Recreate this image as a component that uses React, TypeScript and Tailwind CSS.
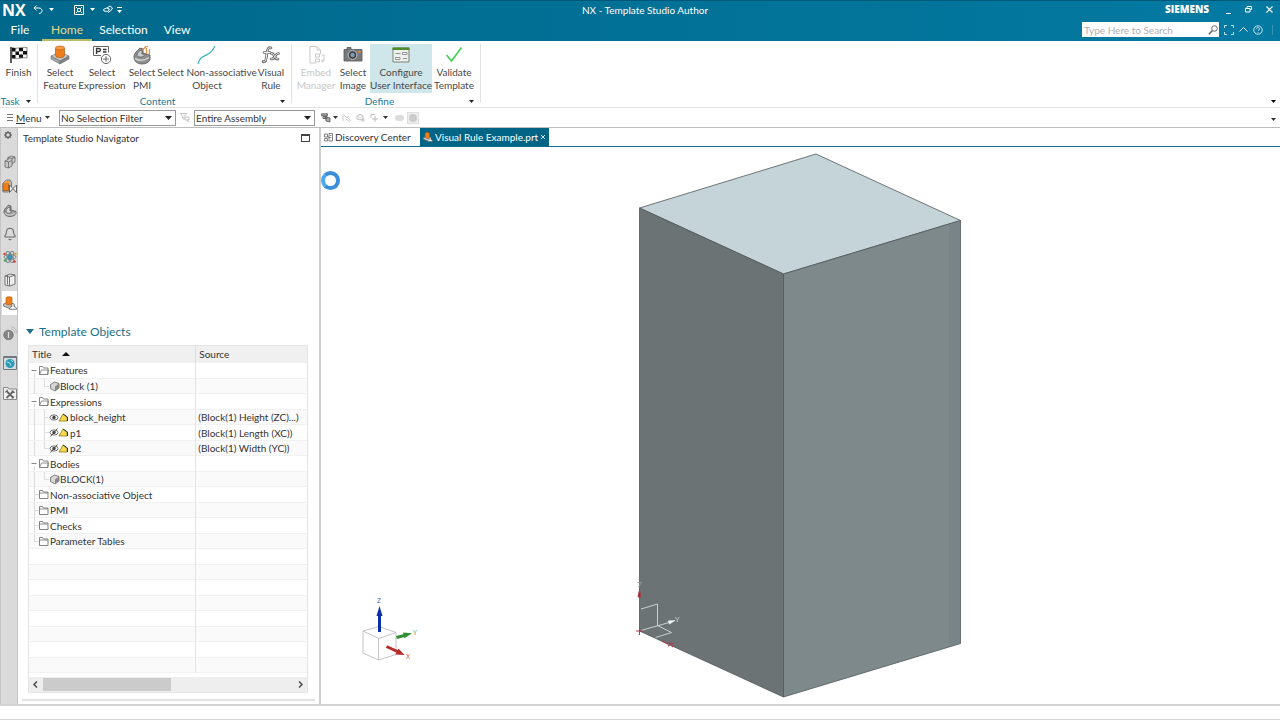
import React from 'react';
import { Bell } from 'lucide-react';

const Caret: React.FC<{ className?: string }> = ({ className = '' }) => (
  <svg className={`shrink-0 ${className}`} width="5" height="3" viewBox="0 0 5 3" fill="currentColor">
    <path d="M0 0h5L2.5 3z" />
  </svg>
);

const FinishIcon = () => (
  <svg width="18" height="18" viewBox="0 0 18 18">
    <path d="M1 1v16" stroke="#333" strokeWidth="1.6" />
    <path d="M2 1.5c5 2 9-1 15 0v10.500c-6-1-10 2-15 0z" fill="#f4f4f4" stroke="#444" strokeWidth=".6" />
    <path d="M2 2h3.500v3.500H2zM9 2h4v3.300H9zM5.500 5.500H9V9H5.500zM13 5h4v3.500h-4zM2 9h3.500v3.300H2zM9 8.500h4v3.300H9z" fill="#111" />
  </svg>
);

const FeatureIcon = () => (
  <svg width="20" height="20" viewBox="0 0 20 20">
    <path d="M1 11l9-4 9 4-9 5z" fill="#c9cccd" stroke="#777" strokeWidth=".7" />
    <path d="M1 11v3l9 5v-3z" fill="#a3a6a8" stroke="#777" strokeWidth=".7" />
    <path d="M19 11v3l-9 5v-3z" fill="#7f8385" stroke="#777" strokeWidth=".7" />
    <path d="M5.500 3v7.500c0 3 9 3 9 0V3z" fill="#ef7d1a" stroke="#a7550b" strokeWidth=".6" />
    <ellipse cx="10" cy="3" rx="4.500" ry="2" fill="#ff9b3e" stroke="#a7550b" strokeWidth=".6" />
  </svg>
);

const ExpressionIcon = () => (
  <svg width="20" height="20" viewBox="0 0 20 20" fill="none" stroke="#666">
    <path d="M9 10.500H1.500v-9h15v6" />
    <path d="M4.500 9V3.500h2.300c2.200 0 2.200 3 0 3H4.500M11 4.500h3.500M11 7h3.500" stroke="#333" strokeWidth="1.300" />
    <circle cx="14" cy="14" r="4.600" />
    <path d="M14 11.200v5.600M11.200 14h5.600" />
  </svg>
);

const PmiIcon = () => (
  <svg width="20" height="20" viewBox="0 0 20 20">
    <path d="M2 12c0-4 3-6 6-9l3 1v4l7 2v5c-2 3-5 4-8 4-5 0-8-3-8-7z" fill="#8d8f90" stroke="#555" strokeWidth=".8" />
    <path d="M3 13.500c4 2.500 9 2.500 14-1" fill="none" stroke="#d0d0d0" strokeWidth="1.500" />
    <path d="M5 10c0-3 3-5 5-5v4c2 0 3 1 2 2-2 1.500-7 1.500-7-1z" fill="#c9cbcc" stroke="#555" strokeWidth=".7" />
    <path d="M10.500 5L14 1.500M13 1.500h3M14.500 3v6M17.500 4v5" fill="none" stroke="#ef8a3a" strokeWidth="1.200" />
  </svg>
);

const CurveIcon = () => (
  <svg width="20" height="20" viewBox="0 0 20 20" fill="none" stroke="#3fb3bd" strokeWidth="1.200">
    <path d="M1 19c2-8 6-7 10-10 4-2 5-4 7-8" />
  </svg>
);

const FxIcon = () => (
  <svg width="20" height="20" viewBox="0 0 20 20" fill="none" strokeLinecap="round">
    <g stroke="#666" strokeWidth="2.600">
      <path d="M10 3c-3-1.500-3.500 2-4 5l-1 6c-.4 3-2 3.500-3 2.500M3 7.500h6" />
      <path d="M10.500 8.500c3-1 2.500 6.500 6.500 5.500M17.500 8.500c-3-1-3.500 6.500-7.500 5.500" />
    </g>
    <g stroke="#f6f6f6" strokeWidth="1">
      <path d="M10 3c-3-1.500-3.500 2-4 5l-1 6c-.4 3-2 3.500-3 2.500M3 7.500h6" />
      <path d="M10.500 8.500c3-1 2.500 6.500 6.500 5.500M17.500 8.500c-3-1-3.500 6.500-7.500 5.500" />
    </g>
  </svg>
);

const EmbedIcon = () => (
  <svg width="20" height="20" viewBox="0 0 20 20" fill="none" stroke="#c9c9c9">
    <path d="M10 18H4V1.500h7l3.500 3.500v4M11 1.500V5h3.500" />
    <path d="M9.500 9h4v3h-4zM9.500 14h4v3h-4zM15.500 10H18v6h-2.500M17 14.500L15.500 16l1.500 1.500" />
  </svg>
);

const CameraIcon = () => (
  <svg width="20" height="20" viewBox="0 0 20 20">
    <path d="M1 4.500h3V2.500h4v2h11V16H1z" fill="#77797b" stroke="#555" strokeWidth=".8" />
    <circle cx="9.500" cy="10" r="4.400" fill="#3a4047" stroke="#ccc" />
    <circle cx="9.500" cy="10" r="2.200" fill="#7f9cb8" />
    <path d="M15 7h2.500" stroke="#f0902f" strokeWidth="1.500" />
  </svg>
);

const ConfigureIcon = () => (
  <svg width="20" height="20" viewBox="0 0 20 20">
    <path d="M2 3h16v14H2z" fill="#eef0ec" stroke="#7a8078" />
    <path d="M1.500 2.500h17v2.500h-17z" fill="#4f8a2d" />
    <path d="M4.500 8.500h5M11.500 7.500h4.500v2h-4.500zM12 13.500h4M4.500 12.500H9v2H4.500z" fill="#fff" stroke="#85898a" strokeWidth=".9" />
  </svg>
);

const ValidateIcon = () => (
  <svg width="20" height="20" viewBox="0 0 20 20" fill="none" stroke="#3fd14f" strokeWidth="1.600">
    <path d="M2.500 10l5 6L17.500 2.500" />
  </svg>
);

interface RibbonButtonProps {
  icon: React.ReactNode;
  lines: string[];
  width: string;
  disabled?: boolean;
  active?: boolean;
}

const RibbonButton: React.FC<RibbonButtonProps> = ({ icon, lines, width, disabled, active }) => (
  <button
    disabled={disabled}
    className={`flex h-[49px] shrink-0 flex-col items-center whitespace-nowrap text-[10px] leading-[13px] ${width} ${active ? 'bg-[#cfe6ea]' : ''} ${disabled ? 'text-[#c8c8c8]' : 'text-[#484848]'}`}
  >
    <span className="flex h-[22px] items-center">{icon}</span>
    {lines.map((line) => (
      <span key={line} className="block">{line}</span>
    ))}
  </button>
);

interface RibbonGroupProps {
  label: string;
  className: string;
  children: React.ReactNode;
}

const RibbonGroup: React.FC<RibbonGroupProps> = ({ label, className, children }) => (
  <section className={`my-1 mt-0.5 flex shrink-0 flex-col border-r border-[#e2e2e2] ${className}`}>
    <div className="flex">{children}</div>
    <div className="flex items-center pt-px text-[10px] leading-[14px] text-[#1c7892]">
      <span className="grow pr-1.5 text-center">{label}</span>
      <Caret className="mr-1.5 text-[#222]" />
    </div>
  </section>
);

const TitleBar = () => (
  <header className="flex h-[41px] flex-col border-t border-[#00587a] bg-linear-to-r from-[#00688b] to-[#047aa2] text-white">
    <div className="grid h-[18px] grid-cols-[1fr_auto_1fr] items-center">
      <div className="flex items-center pl-0.5">
        <span className="w-[31px] font-['Open_Sans',sans-serif] text-[16px] leading-4 font-bold">NX</span>
        <button aria-label="Undo" className="flex items-center gap-1.5">
          <svg width="10" height="9" viewBox="0 0 10 9" fill="none" stroke="currentColor">
            <path d="M3.500.5L1 3l2.500 2.500M1 3h5c4 0 4 5.500 0 5.500" />
          </svg>
          <Caret />
        </button>
        <button aria-label="Fit" className="ml-5 flex items-center gap-1.5">
          <svg width="10" height="10" viewBox="0 0 10 10" fill="none" stroke="currentColor">
            <path d="M.5.5h9v9h-9zM3.500 3.500h3v3h-3zM2 2l1 1M8 2L7 3M2 8l1-1M8 8L7 7" />
          </svg>
          <Caret />
        </button>
        <button aria-label="Render style" className="ml-2 flex items-center">
          <svg width="10" height="9" viewBox="0 0 10 9" fill="none" stroke="currentColor">
            <path d="M.5 4.500l3-1.500 3 1-2 2.500-3.500-.5zM4 3l3-2 2.500 2L8 5.500 5 7.500" />
          </svg>
        </button>
        <button aria-label="Customize toolbar" className="ml-1 flex flex-col items-center gap-0.5">
          <span className="h-px w-[5px] bg-white" />
          <Caret />
        </button>
      </div>
      <h1 className="pl-2.5 text-[10px] leading-[14px]">NX - Template Studio Author</h1>
      <div className="flex items-center justify-end pr-[7px]">
        <span className="mr-[17px] font-['Open_Sans',sans-serif] text-[10px] font-extrabold">SIEMENS</span>
        <button aria-label="Minimize" className="mr-3 flex h-2 w-[7px] items-end">
          <span className="h-px w-[5px] bg-white" />
        </button>
        <button aria-label="Restore" className="mr-3.5">
          <svg width="7" height="7" viewBox="0 0 7 7" fill="none" stroke="currentColor">
            <path d="M2 2.500V.5h4.500v3H5M.5 2.500H5v3.500H.5z" />
          </svg>
        </button>
        <button aria-label="Close">
          <svg width="7" height="7" viewBox="0 0 7 7" stroke="currentColor" strokeWidth="1.200">
            <path d="M.5.5l6 6M6.500.5l-6 6" />
          </svg>
        </button>
      </div>
    </div>
    <div className="flex grow items-stretch">
      <nav className="flex text-[12px] leading-[18px]">
        <button className="w-10 pt-px">File</button>
        <button className="ml-0.5 w-[50px] border-b-2 border-[#b9bd6a] pt-[3px] text-[#e8d98a]">Home</button>
        <button className="w-[63px] pt-px">Selection</button>
        <button className="w-11 pt-px">View</button>
      </nav>
      <div className="ml-auto flex items-center pr-[7px]">
        <label className="flex h-[15px] w-[137px] items-center bg-white pr-px">
          <input
            aria-label="Search"
            placeholder="Type Here to Search"
            className="w-0 grow px-0.5 text-[10px] leading-[14px] text-gray-700 outline-none placeholder:text-[#b0b0b0]"
          />
          <svg width="10" height="10" viewBox="0 0 10 10" fill="none" stroke="#666">
            <circle cx="6.500" cy="3.500" r="2.800" />
            <path d="M4.500 5.500L.8 9.200" strokeWidth="1.600" />
          </svg>
        </label>
        <button aria-label="Full screen" className="ml-[5px]">
          <svg width="10" height="10" viewBox="0 0 10 10" fill="none" stroke="#bfe0ea">
            <path d="M.5 3V.5H3M7 .5h2.500V3M9.500 7v2.500H7M3 9.500H.5V7" />
          </svg>
        </button>
        <button aria-label="Collapse ribbon" className="ml-[5px]">
          <svg width="9" height="5" viewBox="0 0 9 5" fill="none" stroke="#dff0f5">
            <path d="M.5 4.500l4-4 4 4" />
          </svg>
        </button>
        <button aria-label="Help" className="ml-[5px]">
          <svg width="10" height="10" viewBox="0 0 10 10" fill="none" stroke="#dff0f5" strokeWidth=".9">
            <circle cx="5" cy="5" r="4.200" />
            <path d="M3.500 4c0-2 3-2 3 0 0 1-1.500 1-1.500 2M5 7v.8" />
          </svg>
        </button>
        <span className="ml-[9px] h-2.5 w-px bg-[#3b93b2]" />
      </div>
    </div>
  </header>
);

const Ribbon = () => (
  <div className="flex h-[67px] border-b border-[#e3e3e3] bg-white pt-px">
    <RibbonGroup label="Task" className="w-[38px]">
      <RibbonButton icon={<FinishIcon />} lines={['Finish']} width="w-[37px]" />
    </RibbonGroup>
    <RibbonGroup label="Content" className="w-[254px] pl-[3px]">
      <RibbonButton icon={<FeatureIcon />} lines={['Select', 'Feature']} width="w-[38px]" />
      <RibbonButton icon={<ExpressionIcon />} lines={['Select', 'Expression']} width="w-[46px]" />
      <RibbonButton icon={<PmiIcon />} lines={['Select', 'PMI']} width="w-[34px]" />
      <RibbonButton icon={<CurveIcon />} lines={['Select Non-associative', 'Object']} width="w-[96px]" />
      <RibbonButton icon={<FxIcon />} lines={['Visual', 'Rule']} width="w-[32px]" />
    </RibbonGroup>
    <RibbonGroup label="Define" className="w-[189px] pl-1">
      <RibbonButton icon={<EmbedIcon />} lines={['Embed', 'Manager']} width="w-[40px]" disabled />
      <RibbonButton icon={<CameraIcon />} lines={['Select', 'Image']} width="w-[34px]" />
      <RibbonButton icon={<ConfigureIcon />} lines={['Configure', 'User Interface']} width="w-[62px]" active />
      <RibbonButton icon={<ValidateIcon />} lines={['Validate', 'Template']} width="w-[44px]" />
    </RibbonGroup>
    <button aria-label="Ribbon options" className="mb-1 ml-auto flex items-end pr-1">
      <Caret />
    </button>
  </div>
);

const FilterSelect: React.FC<{ label: string; value: string; width: string }> = ({ label, value, width }) => (
  <label className={`flex h-4 items-center border border-[#9a9a9a] bg-white ${width}`}>
    <select aria-label={label} className="w-0 grow appearance-none pl-px text-[10px] leading-[14px] text-[#333] outline-none">
      <option>{value}</option>
    </select>
    <svg className="mr-[3px]" width="7" height="4" viewBox="0 0 7 4" fill="#222">
      <path d="M0 0h7L3.500 4z" />
    </svg>
  </label>
);

const SelectionBar = () => (
  <div className="flex h-5 items-center border-b border-[#bdbdbd] bg-white pr-1 text-[10px] leading-[14px] text-[#333]">
    <button className="flex w-[59px] items-center pl-[7px]">
      <svg className="mr-[3px]" width="6" height="7" viewBox="0 0 6 7" stroke="#777">
        <path d="M0 .5h6M0 3.500h6M0 6.500h6" />
      </svg>
      <span><u>M</u>enu</span>
      <Caret className="ml-[3px]" />
    </button>
    <FilterSelect label="Selection filter" value="No Selection Filter" width="w-[117px]" />
    <svg className="mx-1" width="10" height="10" viewBox="0 0 10 10" fill="none" stroke="#c4c4c4">
      <path d="M.5.5h6L4 3.500v3L2.500 5V3.500zM5 4h4v3H5zM7 7l2 2.500" />
    </svg>
    <FilterSelect label="Selection scope" value="Entire Assembly" width="w-[121px]" />
    <button aria-label="Filter tools" className="ml-1.5 flex items-center gap-0.5">
      <svg width="10" height="10" viewBox="0 0 10 10" fill="#aaa" stroke="#555" strokeWidth=".8">
        <path d="M.5.8h6v2H.5zM2 3.500h4v2H2zM4.500 4L9 5v4L5 8z" />
      </svg>
      <Caret />
    </button>
    <button aria-label="Snap" disabled className="ml-1">
      <svg width="10" height="10" viewBox="0 0 10 10" fill="none" stroke="#cdcdcd">
        <path d="M1 1v7M2 2l3 3 2-2M4 6l4 3M6 5l3 3" />
      </svg>
    </button>
    <button aria-label="Add face" disabled className="ml-1">
      <svg width="10" height="10" viewBox="0 0 10 10" fill="#eee" stroke="#c4c4c4">
        <path d="M1 3l3-2 3 2v3L4 7 1 6zM7 5v4M5 7h4" />
      </svg>
    </button>
    <button aria-label="Add region" className="ml-1 flex items-center gap-1">
      <svg width="9" height="10" viewBox="0 0 9 10" fill="none" stroke="#bcbcbc">
        <path d="M1 5V1.500h4M5 3v6M2 6h6" />
      </svg>
      <Caret />
    </button>
    <span className="ml-[7px] h-1.5 w-[9px] rounded-full bg-[#dcdcdc]" />
    <span className="ml-[3px] flex size-3 items-center justify-center border border-[#dedede] bg-[#eee]">
      <span className="size-2 rounded-full bg-[#ccc]" />
    </span>
    <Caret className="mt-1 ml-auto" />
  </div>
);

const GearIcon = () => (
  <svg width="8" height="8" viewBox="0 0 8 8" fill="none" stroke="#555">
    <circle cx="4" cy="4" r="2.400" strokeWidth="1.200" />
    <path d="M4 0v1M4 7v1M0 4h1M7 4h1M1.200 1.200l.7.7M6.100 6.100l.7.7M6.800 1.200l-.7.7M1.900 6.100l-.7.7" />
  </svg>
);

const BoxIcon = () => (
  <svg width="12" height="14" viewBox="0 0 12 14" stroke="#666" strokeWidth=".8">
    <path d="M1 6l3-1.500V2.500L7.500 1 11 2v5L8 8.500V11l-3.500 2L1 12z" fill="#c8c8c8" />
    <path d="M1 6l3.500 1V13M4.500 7L8 5.500v3M4 4.500V2.500l4 1L11 2M8 3.500v2" fill="none" />
  </svg>
);

const AssemblyIcon = () => (
  <svg width="15" height="14" viewBox="0 0 15 14">
    <path d="M1 4l3.500-3H8l1.500 2v8L6 13H1z" fill="#b9b9b9" stroke="#666" strokeWidth=".8" />
    <path d="M1 4.500h5.500v7H1z" fill="#ef7d1a" stroke="#a25613" strokeWidth=".8" />
    <path d="M1 4.500L3.500 2H8L6.500 4.500z" fill="#ff9b3e" />
    <path d="M7.500 6L11 9.500 14.500 6v7.500L11 9.500l-3.500 4z" fill="#f4f4f4" stroke="#555" strokeWidth=".9" />
  </svg>
);

const PartIcon = () => (
  <svg width="14" height="13" viewBox="0 0 14 13" stroke="#555" strokeWidth=".8">
    <path d="M1 8c0-4 3-4.500 4.500-7L8 2v4l5 1.500v2c-1 2-3.500 3-6 3C3.500 12.500 1 10.500 1 8z" fill="#a5a5a5" />
    <path d="M3 7c0-2 2-3.500 4-4v4c2 0 2 1.500 0 2S3 9 3 7z" fill="#ddd" />
    <path d="M2 9.500c3 2 7 2 10.500-.5" fill="none" stroke="#e2e2e2" />
  </svg>
);

const AtomIcon = () => (
  <svg width="14" height="14" viewBox="0 0 14 14" fill="none" stroke="#77858d">
    <circle cx="7" cy="7" r="2" fill="#2ba3c4" stroke="#2084a0" />
    <ellipse cx="7" cy="7" rx="6" ry="2.500" />
    <ellipse cx="7" cy="7" rx="6" ry="2.500" transform="rotate(60 7 7)" />
    <ellipse cx="7" cy="7" rx="6" ry="2.500" transform="rotate(120 7 7)" />
    <g stroke="none">
      <circle cx="1.500" cy="4" r="1.200" fill="#e23b2e" />
      <circle cx="12.500" cy="4" r="1.200" fill="#e6a01e" />
      <circle cx="2" cy="10.500" r="1.200" fill="#3da64b" />
      <circle cx="11.500" cy="11.500" r="1.200" fill="#c63a2c" />
    </g>
  </svg>
);

const BookIcon = () => (
  <svg width="12" height="14" viewBox="0 0 12 14" fill="#eee" stroke="#666" strokeWidth=".9">
    <path d="M1 3l5-2 5 1v9l-5 2-5-1zM1 3l4.500 1L11 2M5.500 4v9M3.500 2v9.500" />
  </svg>
);

const TemplateIcon: React.FC<{ size?: number }> = ({ size = 14 }) => (
  <svg width={size} height={size} viewBox="0 0 14 14">
    <path d="M.5 8l4-1.500L11 8v2l-4.500 2.500-6-2.500z" fill="#c2c2c2" stroke="#666" strokeWidth=".8" />
    <path d="M3 1.800v6c0 1.500 6 1.500 6 0v-6c0-1.300-6-1.300-6 0z" fill="#ef7d1a" stroke="#a7550b" strokeWidth=".6" />
    <path d="M6.500 13.300c0-2 1-2.300 2.500-2.800-1.200-4 3-4 2 0 1.500.5 2.500.8 2.500 2.800z" fill="#fff" stroke="#444" strokeWidth=".7" />
  </svg>
);

const InfoIcon = () => (
  <svg width="14" height="15" viewBox="0 0 14 15">
    <circle cx="5.500" cy="9" r="4.800" fill="#848484" stroke="#666" strokeWidth=".6" />
    <path d="M5.500 6v6" stroke="#ddd" strokeWidth="1.200" />
    <path d="M8 3c2 0 3.500 1.500 3.500 4M8 1c3 0 5.500 2 5.500 6" fill="none" stroke="#b2b2b2" strokeWidth=".8" />
  </svg>
);

const WebIcon = () => (
  <svg width="14" height="14" viewBox="0 0 14 14">
    <path d="M.5.5h13v13H.5z" fill="#d5dcdf" stroke="#6f7b80" />
    <path d="M.5 1.500h13" stroke="#6f7b80" />
    <circle cx="7" cy="7.500" r="4.500" fill="#2c9bb8" />
    <path d="M4 6l3 1 1 3M8 4l2 2" stroke="#a8dce8" fill="none" />
  </svg>
);

const ToolsIcon = () => (
  <svg width="14" height="14" viewBox="0 0 14 14" fill="none">
    <path d="M.5 1.500H5l1 1.500h7.500v10.500H.5z" fill="#f1f1f1" stroke="#888" />
    <path d="M3.500 12l7-7M3.500 5l7 7" stroke="#666" strokeWidth="1.800" />
    <path d="M2 6c1.500 0 2.500-1 2-2.500M9 4.500c0 2 2 2.500 3 1.500M9 12.500l2-2" stroke="#555" />
  </svg>
);

const railItems = [
  { label: 'Part navigator', icon: <BoxIcon />, size: 'h-6' },
  { label: 'Assembly navigator', icon: <AssemblyIcon />, size: 'h-6' },
  { label: 'Constraint navigator', icon: <PartIcon />, size: 'h-6' },
  { label: 'Notifications', icon: <Bell size={14} strokeWidth={1.8} color="#666" />, size: 'h-[23px]' },
  { label: 'Physics', icon: <AtomIcon />, size: 'h-[23px]' },
  { label: 'Reuse library', icon: <BookIcon />, size: 'h-[23px]' },
  { label: 'Template studio', icon: <TemplateIcon />, size: 'h-6 bg-white mb-[3px]' },
  { label: 'Information', icon: <InfoIcon />, size: 'h-[30px]' },
  { label: 'Web browser', icon: <WebIcon />, size: 'h-[30px]' },
  { label: 'Tools', icon: <ToolsIcon />, size: 'h-[30px]' },
];

const ResourceBar = () => (
  <aside className="flex w-[18px] shrink-0 flex-col border-x border-[#c4c4c4] bg-[#dadada] pl-px">
    <button aria-label="Resource bar options" className="flex h-[22px] items-start pt-[3px] pl-0.5">
      <GearIcon />
    </button>
    {railItems.map((item) => (
      <button key={item.label} aria-label={item.label} className={`flex items-center justify-center ${item.size}`}>
        {item.icon}
      </button>
    ))}
  </aside>
);

type NodeKind = 'folderOpen' | 'folder' | 'block' | 'visible' | 'hidden';

interface TreeRow {
  title: string;
  kind?: NodeKind;
  source?: string;
  last?: boolean;
}

const rows: TreeRow[] = [
  { title: 'Features', kind: 'folderOpen' },
  { title: 'Block (1)', kind: 'block', last: true },
  { title: 'Expressions', kind: 'folderOpen' },
  { title: 'block_height', kind: 'visible', source: '(Block(1) Height (ZC)...)' },
  { title: 'p1', kind: 'hidden', source: '(Block(1) Length (XC))' },
  { title: 'p2', kind: 'hidden', source: '(Block(1) Width (YC))', last: true },
  { title: 'Bodies', kind: 'folderOpen' },
  { title: 'BLOCK(1)', kind: 'block', last: true },
  { title: 'Non-associative Object', kind: 'folder' },
  { title: 'PMI', kind: 'folder' },
  { title: 'Checks', kind: 'folder' },
  { title: 'Parameter Tables', kind: 'folder', last: true },
  ...Array.from({ length: 8 }, () => ({ title: '' })),
];

// Connector lines and glyphs in front of a tree label
const TreeGlyph: React.FC<{ row: TreeRow }> = ({ row }) => {
  const { kind, last } = row;
  if (kind === 'folderOpen' || kind === 'folder') {
    return (
      <svg className="shrink-0" width="21" height="15" viewBox="0 0 21 15" fill="none">
        {kind === 'folder' ? (
          <path d={last ? 'M5.500 0v7.500H10' : 'M5.500 0v15M5.500 7.500H10'} stroke="#ddd" />
        ) : (
          <g>
            <path d="M5.500 10v5" stroke="#ddd" />
            <path d="M2.500 7.500h5" stroke="#888" />
          </g>
        )}
        <path d="M10.500 11.500v-8h3l1 1.500h4.500v6.500z" stroke="#777" fill="#fff" strokeWidth=".9" />
        <path d={kind === 'folder' ? 'M10.500 6h8.500' : 'M10.500 11.500l2-4.500h7l-1 4.500'} stroke="#777" strokeWidth=".8" />
      </svg>
    );
  }
  if (kind === 'block') {
    return (
      <svg className="shrink-0" width="31" height="15" viewBox="0 0 31 15" fill="none">
        <path d="M5.500 0v15M15.500 0v7.500H20" stroke="#ddd" />
        <path d="M21.500 5.500l4-2.500 4.500 1.500v4.500L26 12l-4.500-2.500z" fill="#d6d6d6" stroke="#666" strokeWidth=".8" />
        <path d="M26 7.500l4-3v4.500L26 12z" fill="#888" />
      </svg>
    );
  }
  return (
    <svg className="shrink-0" width="41" height="15" viewBox="0 0 41 15" fill="none">
      <path d={last ? 'M5.500 0v15M15.500 0v7.500H20' : 'M5.500 0v15M15.500 0v15M15.500 7.500H20'} stroke="#ddd" />
      <ellipse cx="25" cy="7.500" rx="4" ry="2.600" stroke="#555" strokeWidth=".8" />
      <circle cx="25" cy="7.500" r="1.700" fill="#444" />
      {kind === 'hidden' && <path d="M21.500 11.500l7-8" stroke="#555" />}
      <path d="M30 11L34 4l4 3.500V11z" fill="#f6d94d" stroke="#8e7b1d" strokeWidth=".8" />
      <path d="M34 4l4.500 3v4" stroke="#333" />
    </svg>
  );
};

const Navigator = () => (
  <section className="flex w-[303px] shrink-0 flex-col border-r-2 border-[#cfcfcf] bg-white text-[#333]">
    <div className="flex h-5 items-center justify-between pr-[9px] pl-[5px]">
      <h2 className="text-[10px] leading-[14px]">Template Studio Navigator</h2>
      <button aria-label="Maximize panel" className="h-2 w-[9px] border border-t-2 border-[#444]" />
    </div>
    <div className="grow" />
    <button className="mx-2 flex h-[26px] items-center gap-[5px] text-[12px] text-[#1c6f88]">
      <svg width="8" height="5" viewBox="0 0 8 5" fill="currentColor">
        <path d="M0 0h8L4 5z" />
      </svg>
      Template Objects
    </button>
    <div className="mr-[11px] ml-2.5 border border-[#e4e4e4]">
      <table className="w-full table-fixed border-collapse text-left text-[10px] leading-[14px]">
        <thead className="bg-[#f0f0f0]">
          <tr className="h-[17px]">
            <th className="w-[60%] border-r border-[#ddd] p-0 pl-[3px] font-normal">
              <span className="flex items-center gap-2.5">
                Title
                <svg width="8" height="4" viewBox="0 0 8 4" fill="#111">
                  <path d="M0 4h8L4 0z" />
                </svg>
              </span>
            </th>
            <th className="p-0 pl-[3px] font-normal">Source</th>
          </tr>
        </thead>
        <tbody>
          {rows.map((row, i) => (
            <tr key={i} className="border-b border-[#f1f1f1] odd:h-4 even:h-[15px] even:bg-[#fafafa]">
              <td className="border-r border-[#e4e4e4] p-0">
                {row.kind && (
                  <span className="-my-px flex items-center whitespace-nowrap">
                    <TreeGlyph row={row} />
                    {row.title}
                  </span>
                )}
              </td>
              <td className="p-0 pl-0.5 whitespace-nowrap">
                {row.source && <span className="-my-px block">{row.source}</span>}
              </td>
            </tr>
          ))}
        </tbody>
      </table>
      <div className="mt-1 flex h-[15px] items-center bg-[#eee] px-1">
        <button aria-label="Scroll left" className="w-2.5">
          <svg width="5" height="7" viewBox="0 0 5 7" fill="none" stroke="#444" strokeWidth="1.400">
            <path d="M4 .5l-3 3 3 3" />
          </svg>
        </button>
        <div className="flex grow">
          <div className="h-[13px] w-1/2 bg-[#cbcbcb]" />
        </div>
        <button aria-label="Scroll right" className="w-[5px]">
          <svg width="5" height="7" viewBox="0 0 5 7" fill="none" stroke="#444" strokeWidth="1.400">
            <path d="M1 .5l3 3-3 3" />
          </svg>
        </button>
      </div>
    </div>
    <div className="mx-1 mt-1.5 mb-[3px] h-0.5 bg-[#e2e2e2]" />
  </section>
);

const DocumentTabs = () => (
  <div className="flex h-[19px] shrink-0 border-b border-[#0f6f88] text-[10px] leading-[18px] text-[#333]">
    <button className="flex w-[99px] items-center gap-0.5 pl-[3px] whitespace-nowrap">
      <svg width="9" height="9" viewBox="0 0 9 9" fill="none" stroke="#666" strokeWidth=".8">
        <path d="M.5 1h3v3h-3zM5 .5h3.500V8H5zM.5 5.500h3V8h-3zM6 2.500h1.500M6 4.500h1.500M3 3l3 2" />
      </svg>
      Discovery Center
    </button>
    <div className="flex w-[129px] items-center justify-between bg-[#006487] pr-1 pl-[3px] text-white">
      <button className="flex items-center gap-0.5 whitespace-nowrap">
        <TemplateIcon size={10} />
        Visual Rule Example.prt
      </button>
      <button aria-label="Close tab">
        <svg width="4" height="4" viewBox="0 0 4 4" stroke="#d0e4ec">
          <path d="M0 0l4 4M4 0L0 4" />
        </svg>
      </button>
    </div>
  </div>
);

const Scene = () => (
  <svg className="h-full w-full" viewBox="321 147 959 557" fill="none">
    <g stroke="#4f5759" strokeWidth=".8" strokeLinejoin="round">
      <path d="M639.500 208L816 154l144.500 66.500L783.500 274z" fill="#c5d4d9" />
      <path d="M639.500 208l144 66v423l-144-66z" fill="#6b7375" />
      <path d="M783.500 274l177-53.500V643.500l-177 53.500z" fill="#7e898c" />
    </g>
    <path d="M949 224.500l11-3.500v422l-11 3.500z" fill="#788488" />
    {/* datum coordinate system at the block corner */}
    <g stroke="#d4d9da" strokeWidth=".9">
      <path d="M641 609l16.500-5v21.500l14 7-16 5M641 630.500l28-8" />
      <path d="M675 620.500l-7 .5 1.500 3z" fill="#fff" />
    </g>
    <text x="675" y="622" fill="#d8dddd" className="font-['Open_Sans',sans-serif] text-[8px]">Y</text>
    <g stroke="#a8404a">
      <path d="M636 631h7M639.500 627v8M639.500 597v-8" />
      <path d="M638 597l1.500-7 1.500 7z" fill="#7d3038" />
      <path d="M662 641l6 3M669 642l4 5M673 643l-5 3" strokeWidth="1.300" />
    </g>
    <path d="M637.500 582.500h4l-3 4.500" stroke="#9a9a9a" strokeWidth=".8" />
    {/* view triad */}
    <g stroke="#bdbdbd" strokeWidth=".9">
      <path d="M363 631l16-4.500 17 6-17 6zM363 631v22l15.500 7V638.500M378.500 660l17.500-5.500v-22" />
    </g>
    <path d="M379.500 632v-18" stroke="#0b2fa8" strokeWidth="3" />
    <path d="M376.500 616l3-10 3 10z" fill="#0b2fa8" />
    <path d="M396.500 637.500l8-2" stroke="#2f8f35" strokeWidth="3" />
    <path d="M403 632.500l9 .8-7.500 5z" fill="#2f8f35" />
    <path d="M386.500 646.500l12 5.500" stroke="#b92a27" strokeWidth="3" />
    <path d="M398.500 648.500l6 6.500-9-.5z" fill="#b92a27" />
    <g className="font-['Open_Sans',sans-serif] text-[7px]">
      <text x="377" y="603" fill="#4766d0">Z</text>
      <text x="413" y="635" fill="#4aa04e">Y</text>
      <text x="406" y="659" fill="#cf4642">X</text>
    </g>
  </svg>
);

export default function App() {
  return (
    <div className="flex h-screen flex-col overflow-hidden bg-white font-[Lato,sans-serif]">
      <TitleBar />
      <Ribbon />
      <SelectionBar />
      <div className="flex min-h-0 grow">
        <ResourceBar />
        <Navigator />
        <main className="flex min-w-0 grow flex-col">
          <DocumentTabs />
          <div className="relative min-h-0 grow">
            <Scene />
            <div className="absolute top-6 left-0 size-[19px] rounded-full border-4 border-[#3a8fd8] border-l-[#4aa9e8]" />
          </div>
        </main>
      </div>
      <footer className="h-4 shrink-0 border-y border-t-2 border-[#d4d4d4] bg-white" />
    </div>
  );
}
